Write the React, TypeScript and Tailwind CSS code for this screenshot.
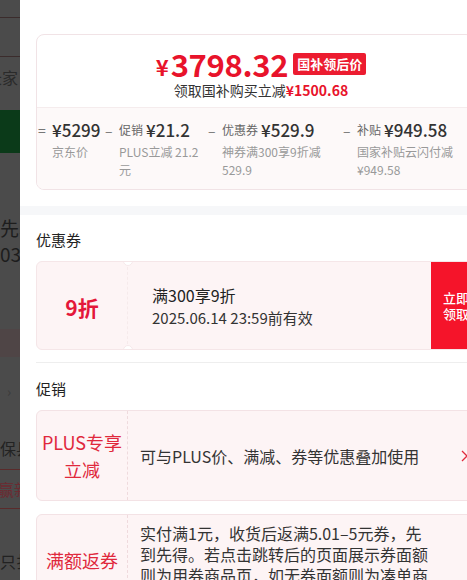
import React from "react";

const font = { fontFamily: '"Noto Sans CJK SC", "Noto Sans", sans-serif' };

function Notch({ top }: { top: boolean }) {
  return (
    <div
      className={`absolute left-[86px] w-[10px] h-[10px] rounded-full bg-white border border-[#f5e8ea] ${top ? "-top-[6px]" : "-bottom-[6px]"}`}
    />
  );
}

function Col({
  w,
  sign,
  label,
  value,
  sub,
  pr,
}: {
  w: string;
  sign: string;
  label?: string;
  value: string;
  sub: React.ReactNode;
  pr: string;
}) {
  return (
    <div className={`${w} shrink-0`}>
      <div className="flex items-center h-[24px] whitespace-nowrap">
        <span className="text-[#777] text-[14px] w-[14px]">{sign}</span>
        {label && <span className="text-[12px] text-[#666] mr-[3px]">{label}</span>}
        <span className="text-[17px] font-medium text-[#333]">{value}</span>
      </div>
      <div className={`pl-[14px] ${pr} text-[12px] leading-[18px] text-[#999] mt-[1px]`}>{sub}</div>
    </div>
  );
}

export default function App() {
  return (
    <div className="w-[467px] h-[580px] overflow-hidden flex bg-white" style={font}>
      {/* dimmed background page */}
      <div className="w-[20px] h-[580px] shrink-0 bg-[#4b4b4b] text-[#262626] overflow-hidden">
        <div className="h-[18px] border-b border-[#3b2c2c]" />
        <div className="h-[39px] border-b border-[#3b2c2c]" />
        <div className="h-[40px] pt-[10px] leading-[20px] text-[16px] -ml-[14px] whitespace-nowrap text-[#2a2a2a]">长家</div>
        <div className="h-[13px]" />
        <div className="h-[43px] bg-[#0b3a19]" />
        <div className="h-[62px]" />
        <div className="leading-[26px] whitespace-nowrap text-[19px] text-[#1d1d1d]">先卓</div>
        <div className="leading-[26px] whitespace-nowrap text-[19px] text-[#1d1d1d]">03</div>
        <div className="h-[62px]" />
        <div className="h-[28px] bg-[#4f4546]" />
        <div className="h-[24px]" />
        <div className="leading-[20px] text-[#3a3a3a] text-[14px] pl-[7px]">›</div>
        <div className="h-[37px]" />
        <div className="leading-[20px] whitespace-nowrap text-[16px] text-[#222]">保县</div>
        <div className="h-[12px] border-b border-[#5a2b2b]" />
        <div className="leading-[38px] whitespace-nowrap text-[16px] text-[#6b2a31] border-b border-[#5a2b2b] -ml-[2px]">赢新</div>
        <div className="h-[42px]" />
        <div className="leading-[20px] whitespace-nowrap text-[16px] text-[#222]">只扌</div>
      </div>

      {/* sheet */}
      <div className="w-[470px] shrink-0 bg-white">
        <div className="h-[34px] flex justify-center">
          <div className="-mt-[16px] text-[15px] leading-[16px] text-[#aaa]">明细</div>
        </div>

        <div className="px-[16px]">
          {/* price card */}
          <div className="border border-[#f1e3e6] rounded-[8px] overflow-hidden">
            <div className="h-[72px] flex flex-col items-center pt-[13px] pl-[12px]">
              <div className="flex items-center h-[32px]">
                <span className="text-[#e8132b] font-bold text-[22px] leading-[28px] mt-[4px]">¥</span>
                <span className="text-[#e8132b] font-bold text-[31px] leading-[32px] tracking-[-0.3px] ml-[2px]">3798.32</span>
                <span className="ml-[5px] bg-[#ec1c30] text-white text-[13px] font-bold leading-[22px] px-[4px] rounded-[2px]">国补领后价</span>
              </div>
              <div className="text-[14px] leading-[20px] text-[#333]">
                领取国补购买立减<span className="text-[#e8132b] font-bold">¥1500.68</span>
              </div>
            </div>
            <div className="bg-[#fdf9f9] border-t border-[#f5eced] h-[82px] flex pt-[10px] pl-[1px]">
              <Col w="w-[67px]" sign="=" value="¥5299" sub="京东价" pr="" />
              <Col w="w-[103px]" sign="–" label="促销" value="¥21.2" sub="PLUS立减 21.2 元" pr="pr-[4px]" />
              <Col w="w-[135px]" sign="–" label="优惠券" value="¥529.9" sub="神券满300享9折减529.9" pr="pr-[16px]" />
              <Col w="w-[120px]" sign="–" label="补贴" value="¥949.58" sub="国家补贴云闪付减¥949.58" pr="pr-[8px]" />
            </div>
          </div>
        </div>

        <div className="h-[16px]" />
        <div className="h-[9px] bg-[#f6f7f9]" />

        <div className="px-[16px]">
          <div className="h-[15px]" />
          <div className="text-[15px] text-[#222] leading-[20px]">优惠券</div>
          <div className="h-[11px]" />
          {/* coupon */}
          <div className="relative h-[89px] bg-[#fdf4f5] border border-[#f5e6e8] rounded-[6px] flex overflow-hidden">
            <div className="w-[91px] shrink-0 flex items-center justify-center text-[#e4173a] font-bold text-[21px] pt-[4px] border-r border-dashed border-[#f6eaeb]">
              9折
            </div>
            <Notch top />
            <Notch top={false} />
            <div className="flex-1 flex flex-col justify-center pl-[24px]">
              <div className="text-[16px] text-[#222] leading-[22px]">满300享9折</div>
              <div className="text-[15px] text-[#333] leading-[20px] mt-[2px]">2025.06.14 23:59前有效</div>
            </div>
            <div className="w-[42px] shrink-0 bg-[#f5142a] flex items-center pl-[12px] text-white text-[13px] leading-[16px] font-medium overflow-hidden whitespace-nowrap">
              立即<br />领取
            </div>
          </div>
          <div className="h-[13px] border-b border-[#eeeeee]" />
          <div className="h-[16px]" />
          <div className="text-[15px] text-[#222] leading-[20px]">促销</div>
          <div className="h-[11px]" />
          {/* promo 1 */}
          <div className="h-[91px] bg-[#fdf4f5] border border-[#f3e2e5] rounded-[6px] flex">
            <div className="w-[91px] shrink-0 flex flex-col items-center justify-center text-[#e0283c] text-[18px] leading-[27px] border-r border-dashed border-[#efdadd]">
              <span>PLUS专享</span>
              <span>立减</span>
            </div>
            <div className="flex-1 flex items-center pl-[12px] text-[16px] text-[#333] whitespace-nowrap">
              可与PLUS价、满减、券等优惠叠加使用
            </div>
            <div className="w-[12px] shrink-0 flex items-center">
              <svg width="8" height="12" viewBox="0 0 8 12" fill="none" stroke="#e0283c" strokeWidth="1.3">
                <path d="M1 1l5 5-5 5" />
              </svg>
            </div>
          </div>
          <div className="h-[13px]" />
          {/* promo 2 */}
          <div className="h-[120px] bg-[#fdf4f5] border border-[#f3e2e5] rounded-[6px] flex">
            <div className="w-[91px] shrink-0 text-center text-[#e0283c] text-[18px] leading-[24px] pt-[33px] border-r border-dashed border-[#efdadd]">
              满额返券
            </div>
            <div className="flex-1 pl-[12px] pt-[8px] text-[16px] leading-[21px] text-[#333] whitespace-nowrap">
              <div>实付满1元，收货后返满5.01–5元券，先</div>
              <div>到先得。若点击跳转后的页面展示券面额</div>
              <div>则为用券商品页，如无券面额则为凑单商</div>
              <div>品页。</div>
            </div>
          </div>
        </div>
      </div>
    </div>
  );
}
